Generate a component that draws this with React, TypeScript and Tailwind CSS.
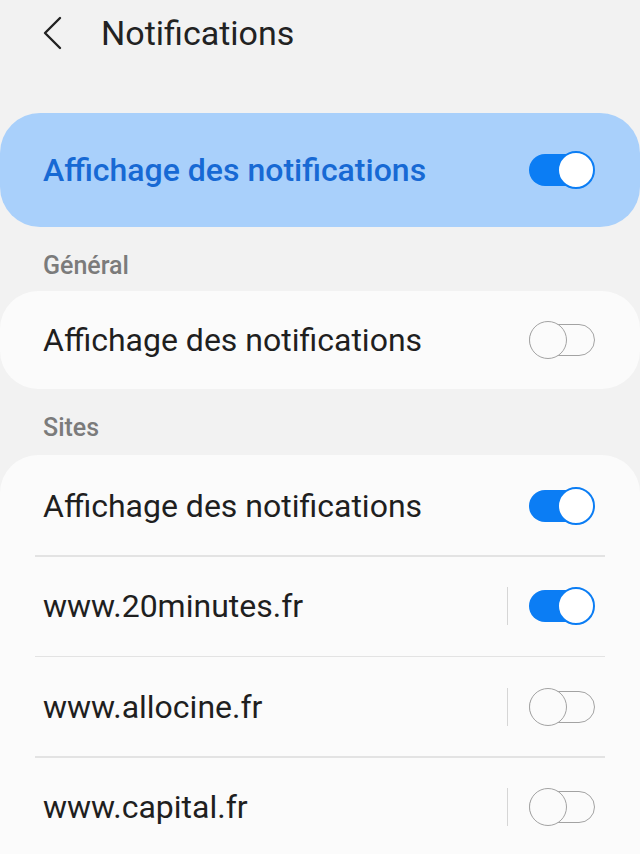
type Row = { label: string; on: boolean; split?: boolean };

const SITES: Row[] = [
  { label: 'Affichage des notifications', on: true },
  { label: 'www.20minutes.fr', on: true, split: true },
  { label: 'www.allocine.fr', on: false, split: true },
  { label: 'www.capital.fr', on: false, split: true },
];

function Toggle({ on }: { on: boolean }) {
  if (on) {
    return (
      <div className="relative w-[66px] h-[38px] flex items-center shrink-0">
        <div className="w-[62px] h-[32px] rounded-full bg-[#0b7df4]" />
        <div className="absolute right-0 top-0 w-[38px] h-[38px] rounded-full bg-white border-[2.5px] border-[#0b7df4]" />
      </div>
    );
  }
  return (
    <div className="relative w-[66px] h-[38px] flex items-center shrink-0">
      <div className="w-[66px] h-[32px] rounded-full border-[1.5px] border-[#a3a3a3]" />
      <div className="absolute left-0 top-0 w-[38px] h-[38px] rounded-full bg-[#fbfbfb] border-[1.5px] border-[#a3a3a3]" />
    </div>
  );
}

export default function App() {
  return (
    <div className="w-[640px] h-[854px] overflow-hidden bg-[#f2f2f2] text-[#1f1f1f]" style={{ fontFamily: 'Roboto, "Liberation Sans", sans-serif' }}>
      {/* header */}
      <div className="h-[66px] flex items-center pl-[43px]">
        <svg width="20" height="34" viewBox="0 0 20 34" fill="none" className="shrink-0">
          <path d="M17 2 L2 17 L17 32" stroke="#222" strokeWidth="2.4" strokeLinecap="round" strokeLinejoin="round" />
        </svg>
        <span className="ml-[38px] text-[34px] text-[#222] leading-none">Notifications</span>
      </div>

      <div className="h-[47px]" />

      {/* master switch */}
      <div className="h-[114px] rounded-[40px] bg-[#a9d0fb] flex items-center pl-[43px] pr-[45px] justify-between">
        <span className="text-[32px] font-medium text-[#1769d4]">Affichage des notifications</span>
        <Toggle on />
      </div>

      <div className="pl-[43px] pt-[26px] pb-[12px] text-[25px] font-medium text-[#7b7b7b] leading-[26px]">Général</div>

      <div className="h-[98px] rounded-[38px] bg-[#fbfbfb] flex items-center pl-[43px] pr-[45px] justify-between">
        <span className="text-[32px]">Affichage des notifications</span>
        <Toggle on={false} />
      </div>

      <div className="pl-[43px] pt-[26px] pb-[14px] text-[25px] font-medium text-[#7b7b7b] leading-[26px]">Sites</div>

      <div className="rounded-t-[38px] bg-[#fbfbfb] pt-[1px]">
        {SITES.map((r, i) => (
          <div key={r.label}>
            {i > 0 && <div className="mx-[35px] h-[1.5px] bg-[#e3e3e3]" />}
            <div className="h-[99px] flex items-center pl-[43px] pr-[45px]">
              <span className="text-[32px] flex-1">{r.label}</span>
              {r.split && <div className="w-[1.5px] h-[38px] bg-[#d6d6d6] mr-[21px]" />}
              <Toggle on={r.on} />
            </div>
          </div>
        ))}
      </div>
    </div>
  );
}
